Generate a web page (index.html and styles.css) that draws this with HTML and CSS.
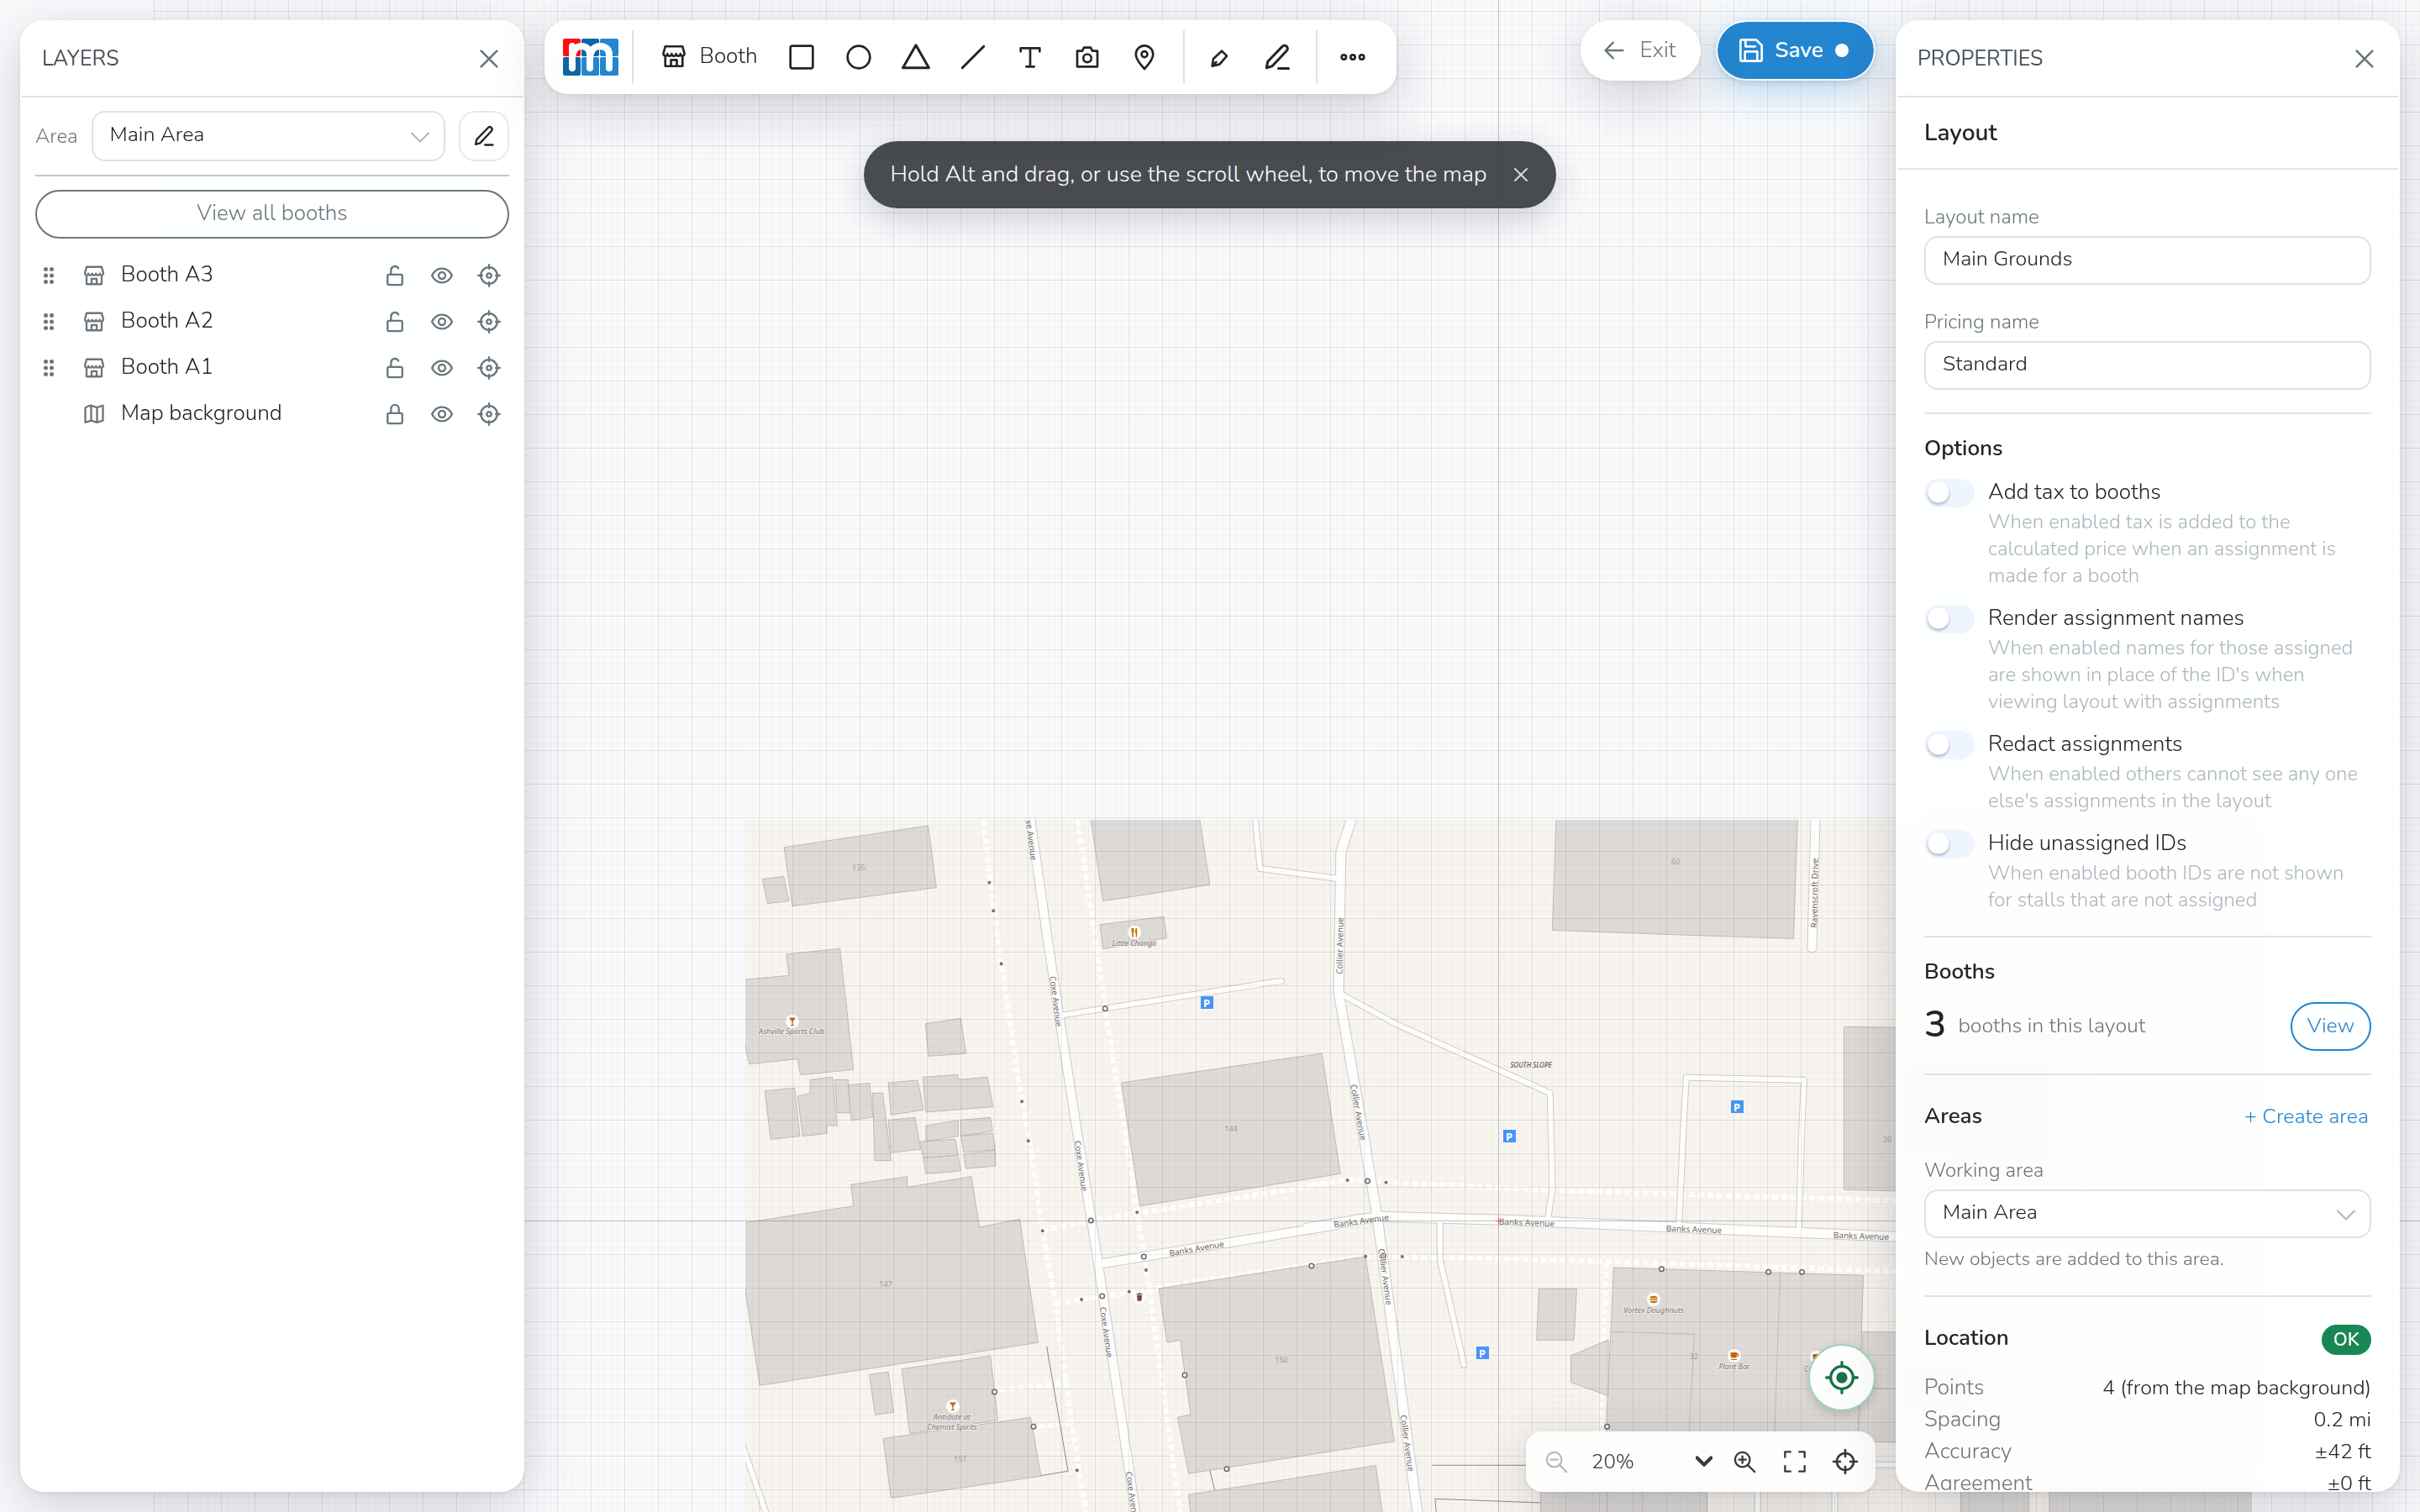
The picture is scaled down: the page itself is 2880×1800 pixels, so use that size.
FILE: index.html
```html
<!DOCTYPE html>
<html lang="en">
<head>
<meta charset="utf-8">
<meta name="viewport" content="width=device-width, initial-scale=1">
<title>Main Grounds – Layout editor</title>
<link rel="stylesheet" href="styles.css">
</head>
<body>
<svg class="sprite" aria-hidden="true">
  <symbol id="i-close" viewBox="0 0 24 24"><path d="M5 5l14 14M19 5L5 19"/></symbol>
  <symbol id="i-store" viewBox="0 0 24 24"><path d="M4.300 3.200h15.400l1.600 5.900c.3 1.500-.5 2.600-1.700 2.600-1.100 0-1.800-.8-1.800-1.800 0 1-.9 1.800-1.900 1.800s-1.950-.8-1.950-1.800c0 1-.9 1.800-1.950 1.800s-1.950-.8-1.950-1.800c0 1-.95 1.800-1.950 1.800s-1.900-.8-1.900-1.800c0 1-.7 1.800-1.800 1.800-1.200 0-2-1.100-1.700-2.600zM4.300 12v8.800h15.400V12M9.400 20.500v-5.200h5.200v5.200"/></symbol>
  <symbol id="i-map" viewBox="0 0 24 24"><path d="M3 5.500l3.500-1.800L9 3.200l6 2 6-2v15.300l-6 2-6-2-6 2zM9 3.500v15M15 5.500v15"/></symbol>
  <symbol id="i-unlock" viewBox="0 0 24 24"><rect x="4.500" y="11" width="15" height="10.500" rx="1.500"/><path d="M8 11V6.500a4 4 0 0 1 7.500-1.800"/></symbol>
  <symbol id="i-lock" viewBox="0 0 24 24"><rect x="4.500" y="11" width="15" height="10.500" rx="1.500"/><path d="M8 11V6.500a4 4 0 0 1 8 0V11"/></symbol>
  <symbol id="i-eye" viewBox="0 0 24 24"><path d="M1.800 12C4 7.500 7.800 4.800 12 4.800S20 7.500 22.200 12C20 16.500 16.200 19.200 12 19.200S4 16.500 1.800 12z"/><circle cx="12" cy="12" r="3.400"/></symbol>
  <symbol id="i-target" viewBox="0 0 24 24"><circle cx="12" cy="12" r="8.400"/><circle cx="12" cy="12" r="2.300"/><path d="M12 1v4M12 19v4M1 12h4M19 12h4"/></symbol>
  <symbol id="i-crosshair" viewBox="0 0 24 24"><circle cx="12" cy="12" r="7.500"/><path d="M12 1.500v6M12 16.500v6M1.500 12h6M16.500 12h6"/></symbol>
  <symbol id="i-grip" viewBox="0 0 24 24"><path class="dots" d="M8.500 4.500h0M15.500 4.500h0M8.500 12h0M15.500 12h0M8.500 19.500h0M15.500 19.500h0"/></symbol>
  <symbol id="i-edit" viewBox="0 0 24 24"><path d="M3.500 20.500l1-5L16 3.600a2.400 2.400 0 0 1 3.600 3.200L8 19.200zM13 21h8"/></symbol>
  <symbol id="i-pen" viewBox="0 0 24 24"><path d="M5 20l1-6.500 7.500-7 4.500 4.500-6.500 7.500zM5 20l3.500-3.500"/></symbol>
  <symbol id="i-chevron" viewBox="0 0 24 24"><path d="M2 6.500l10 10 10-10"/></symbol>
  <symbol id="i-square" viewBox="0 0 24 24"><rect x="2" y="2" width="20" height="20" rx="1.800"/></symbol>
  <symbol id="i-circle" viewBox="0 0 24 24"><circle cx="12" cy="12" r="10"/></symbol>
  <symbol id="i-triangle" viewBox="0 0 24 24"><path d="M12 2.500L22.300 20.500H1.700z"/></symbol>
  <symbol id="i-line" viewBox="0 0 24 24"><path d="M3.500 20.500l17-17"/></symbol>
  <symbol id="i-text" viewBox="0 0 24 24"><path d="M3.500 7V4h17v3M12 4v16.500M8.500 20.500h7"/></symbol>
  <symbol id="i-camera" viewBox="0 0 24 24"><path d="M3 6.500h4.500L9 3.500h6l1.500 3H21v14H3z"/><circle cx="12" cy="13" r="3.600"/></symbol>
  <symbol id="i-pin" viewBox="0 0 24 24"><path d="M12 22.500C7 17 4.300 13 4.300 9.500a7.700 7.700 0 0 1 15.400 0c0 3.500-2.700 7.500-7.700 13z"/><circle cx="12" cy="9.500" r="2.600"/></symbol>
  <symbol id="i-more" viewBox="0 0 24 24"><circle cx="4" cy="12" r="2"/><circle cx="12" cy="12" r="2"/><circle cx="20" cy="12" r="2"/></symbol>
  <symbol id="i-back" viewBox="0 0 24 24"><path d="M21 12H3.500M11 4l-8 8 8 8"/></symbol>
  <symbol id="i-save" viewBox="0 0 24 24"><path d="M4 2.500h12.500L21.500 7.500V20a1.500 1.500 0 0 1-1.500 1.500H4A1.500 1.500 0 0 1 2.500 20V4A1.500 1.500 0 0 1 4 2.500zM7 3v5.500h8.500M6.500 21v-8h11v8"/></symbol>
  <symbol id="i-zoom-out" viewBox="0 0 24 24"><circle cx="10" cy="10" r="7.500"/><path d="M15.500 15.500l7 7M6.500 10h7"/></symbol>
  <symbol id="i-zoom-in" viewBox="0 0 24 24"><circle cx="10" cy="10" r="7.500"/><path d="M15.500 15.500l7 7M6.500 10h7M10 6.500v7"/></symbol>
  <symbol id="i-full" viewBox="0 0 24 24"><path d="M2 7.500V2h5.500M16.500 2H22v5.500M22 16.500V22h-5.500M7.500 22H2v-5.500"/></symbol>
  <symbol id="i-locate" viewBox="0 0 24 24"><circle cx="12" cy="12" r="8"/><circle class="solid" cx="12" cy="12" r="4"/><path d="M12 1v3M12 20v3M1 12h3M20 12h3"/></symbol>
  <symbol id="poi-bar" viewBox="0 0 16 16"><circle class="poi-bg" cx="8" cy="8" r="8"/><path class="poi-fg" d="M4 3.500h8L8.700 8v4H10v1H6v-1h1.300V8z"/></symbol>
  <symbol id="poi-food" viewBox="0 0 16 16"><circle class="poi-bg" cx="8" cy="8" r="8"/><path class="poi-fg" d="M4.500 3h3v4L7 8v5.500H5.300V8l-.8-1zM9 5c0-1.500 1-2 2.200-2v10.500H9.700V9H9z"/></symbol>
  <symbol id="poi-burger" viewBox="0 0 16 16"><circle class="poi-bg" cx="8" cy="8" r="8"/><path class="poi-fg" d="M3.500 6c0-3 9-3 9 0v.5h-9zM3.500 7.500h9V9h-9zM3.500 10h9c0 3-9 3-9 0z"/></symbol>
  <symbol id="poi-cafe" viewBox="0 0 16 16"><circle class="poi-bg" cx="8" cy="8" r="8"/><path class="poi-fg" d="M3.500 4H11v1h2.200v3.500H11C11 10 10 10.500 9 10.500H6C4.500 10.500 3.500 9.500 3.500 8zM11 6v1.500h1.200V6zM4 12h7v1H4z"/></symbol>
  <symbol id="poi-bin" viewBox="0 0 16 16"><circle class="poi-bg" cx="8" cy="8" r="8"/><path class="bin-fg" d="M4.500 4H7V3h2v1h2.500v1h-7zM5 5.700h6l-.6 7H5.600z"/></symbol>
</svg>

<main class="editor">
  <svg class="canvas" role="img" aria-label="Map of the grounds">
    <defs>
      <pattern id="grid-minor" x="183" y="13" width="8" height="8" patternUnits="userSpaceOnUse"><path class="grid-minor" d="M.5 0V8M0 .5H8"/></pattern>
      <pattern id="grid-major" x="183" y="13" width="40" height="40" patternUnits="userSpaceOnUse"><path class="grid-major" d="M.5 0V40M0 .5H40"/></pattern>
      <clipPath id="map-clip"><rect x="887" y="976" width="1793" height="1600"/></clipPath>
      <g id="roads-nw">
        <path class="service" d="M862 745L1445 623M1374 30L1388 222L1593 257"/>
      </g>
      <g id="roads-sw">
        <path class="service" d="M5 1040L75 1310"/>
      </g>
      <g id="roads-ne">
        <path class="service" d="M75 668L222 778L620 1024L624 1240M962 1240L973 968L1278 977L1270 1240"/>
      </g>
      <g id="roads-se">
        <path class="service" d="M624 0L626 140L614 245M963 0L954 270M1271 0L1265 285M335 250V390L397 765M1027 1105L1520 1122L2439 1188M1158 1110V1320M1358 1116V1320"/>
      </g>
      <g id="streets-nw"><path class="street" d="M774 30L822 480L852 745L909 1240"/></g>
      <g id="streets-sw"><path class="street" d="M909 0L956 400L1058 1310M956 405L1590 265"/></g>
      <g id="streets-ne"><path class="street wide" d="M109 30L78 162L72 665L145 1240"/><path class="street" d="M1308 30L1299 505"/></g>
      <g id="streets-se"><path class="street wide" d="M143 0L172 235L278 1310M-10 276L172 235L500 247L1516 307L2450 352"/></g>
    </defs>

    <g clip-path="url(#map-clip)">
      <rect class="land" x="887" y="976" width="1793" height="1600"/>

      <g class="paths">
        <g transform="translate(880 960) scale(.44643 .33333)">
          <path d="M650 48L688 470L740 940L779 1240M902 48L935 350L975 720L1036 1235"/>
        </g>
        <g transform="translate(880 1370) scale(.44643 .33333)">
          <path d="M779 10L808 285L843 545L885 970L926 1310M1036 5L1060 220L1080 378L1095 520L1177 1310M808 285L937 249L1568 118M843 545L967 519L1060 503L1120 487L1568 398M881 826L681 855M885 972L784 988"/>
        </g>
        <g transform="translate(1560 1370) scale(.45918 .33333)">
          <path d="M0 122L100 103L200 112L620 141L1516 178L2439 215M0 408L142 378L240 378L760 395L1516 430L2439 470M766 400L752 1010"/>
        </g>
      </g>

      <g class="buildings">
        <g transform="translate(880 960) scale(.44643 .33333)">
          <path d="M119 146L503 69L525 290L141 356zM61 260L118 250L132 338L75 347zM935 30H1225L1254 280L969 338zM961 422L1131 394L1139 470L969 509z"/>
          <path d="M10 619L132 604L125 528L268 508L304 940L163 959L155 902L26 920L10 820zM496 776L590 757L604 883L504 892z"/>
          <path d="M68 1016L147 1006L161 1178L83 1189zM155 1035L188 1025L189 976L248 967L261 1140H233V1168L169 1178zM254 976H290L295 1094H261zM290 995L347 988L356 1110L298 1121zM355 1024H382L404 1265H361z"/>
          <path d="M397 987L475 978L491 1084L404 1102zM489 967L582 958L583 976L661 967L676 1073L497 1092zM397 1120L468 1111L483 1225L404 1236zM497 1140L583 1121V1178L497 1195zM590 1120L669 1111L675 1160L590 1177zM590 1177L675 1168L682 1226L598 1236zM483 1198L575 1188L583 1246L490 1255zM490 1255L583 1246L590 1302L497 1312zM597 1244L682 1228L683 1284L604 1294z"/>
          <path d="M1018 987L1553 882L1602 1312L1068 1427z"/>
        </g>
        <g transform="translate(880 1370) scale(.44643 .33333)">
          <path d="M10 258L304 197L297 121L447 92V130L618 92L640 273L747 244L796 685L54 838L10 450zM346 799L397 790L411 934L362 943zM433 779L669 733L689 962L454 1010zM383 1028L776 952L804 1162L404 1240z"/>
          <path d="M1118 492L1669 378L1746 1038L1197 1153L1168 952L1203 942L1175 676L1140 684zM1197 1228L1696 1124L1716 1310H1204z"/>
          <path class="fence" d="M819 698L876 1144L804 1160M1254 1142L1267 1212"/>
        </g>
        <g transform="translate(1560 960) scale(.45918 .33333)">
          <path d="M636 30H1262L1251 472L940 458L626 442zM1382 787L2000 800V1390L1382 1369z"/>
        </g>
        <g transform="translate(1560 1370) scale(.45918 .33333)">
          <path d="M591 493H689L682 676H585zM785 417L1432 445L1418 1040L765 1010zM1431 646L1800 655V1050L1418 1038zM771 675V875L674 827V732zM596 1150H1027V1310H596zM1684 1186L1860 1190V1310H1684zM1914 1192L2450 1206V1310H1914z"/>
          <path d="M1216 436L1202 1020M780 646L994 655L980 1010M1421 848L1800 852M768 1150V1310M860 1150V1310"/>
          <path class="fence" d="M315 1123H600M326 1310L322 1243L596 1257"/>
        </g>
      </g>

      <g class="casing">
        <use href="#roads-nw" transform="translate(880 960) scale(.44643 .33333)"/>
        <use href="#roads-sw" transform="translate(880 1370) scale(.44643 .33333)"/>
        <use href="#roads-ne" transform="translate(1560 960) scale(.45918 .33333)"/>
        <use href="#roads-se" transform="translate(1560 1370) scale(.45918 .33333)"/>
        <use href="#streets-nw" transform="translate(880 960) scale(.44643 .33333)"/>
        <use href="#streets-sw" transform="translate(880 1370) scale(.44643 .33333)"/>
        <use href="#streets-ne" transform="translate(1560 960) scale(.45918 .33333)"/>
        <use href="#streets-se" transform="translate(1560 1370) scale(.45918 .33333)"/>
      </g>
      <g class="surface">
        <use href="#roads-nw" transform="translate(880 960) scale(.44643 .33333)"/>
        <use href="#roads-sw" transform="translate(880 1370) scale(.44643 .33333)"/>
        <use href="#roads-ne" transform="translate(1560 960) scale(.45918 .33333)"/>
        <use href="#roads-se" transform="translate(1560 1370) scale(.45918 .33333)"/>
        <use href="#streets-nw" transform="translate(880 960) scale(.44643 .33333)"/>
        <use href="#streets-sw" transform="translate(880 1370) scale(.44643 .33333)"/>
        <use href="#streets-ne" transform="translate(1560 960) scale(.45918 .33333)"/>
        <use href="#streets-se" transform="translate(1560 1370) scale(.45918 .33333)"/>
      </g>

      <g class="nodes">
        <g transform="translate(880 960) scale(.44643 .33333)"><path d="M666 272h0M677 373h0M698 562h0M753 1054h0M770 1195h0"/><path class="ring" d="M975 722h0"/><path class="hole" d="M975 722h0"/></g>
        <g transform="translate(880 1370) scale(.44643 .33333)"><path d="M808 286h0M1060 220h0M1084 426h0M1039 503h0M912 531h0M900 1141h0"/><path class="ring" d="M937 249h0M1078 378h0M967 519h0M1525 411h0M1187 801h0M680 861h0M784 985h0M1299 1136h0"/><path class="hole" d="M937 249h0M1078 378h0M967 519h0M1525 411h0M1187 801h0M680 861h0M784 985h0M1299 1136h0"/></g>
        <g transform="translate(1560 1370) scale(.45918 .33333)"><path d="M95 105h0M195 113h0M142 377h0M237 378h0"/><path class="ring" d="M147 108h0M188 375h0M909 422h0M1186 433h0M1273 433h0M768 985h0"/><path class="hole" d="M147 108h0M188 375h0M909 422h0M1186 433h0M1273 433h0M768 985h0"/></g>
      </g>

      <g class="street-names">
        <text transform="translate(1227 994) rotate(83)">Coxe Avenue</text>
        <text transform="translate(1257 1192) rotate(83)">Coxe Avenue</text>
        <text transform="translate(1287 1388) rotate(82)">Coxe Avenue</text>
        <text transform="translate(1317 1586) rotate(82)">Coxe Avenue</text>
        <text transform="translate(1348 1782) rotate(82)">Coxe Avenue</text>
        <text transform="translate(1424 1486) rotate(-10)">Banks Avenue</text>
        <text transform="translate(1620 1453) rotate(-8)">Banks Avenue</text>
        <text transform="translate(1817 1455) rotate(2)">Banks Avenue</text>
        <text transform="translate(2016 1463) rotate(2)">Banks Avenue</text>
        <text transform="translate(2215 1471) rotate(2)">Banks Avenue</text>
        <text transform="translate(1594 1126) rotate(-89)">Collier Avenue</text>
        <text transform="translate(1617 1324) rotate(80)">Collier Avenue</text>
        <text transform="translate(1649 1520) rotate(82)">Collier Avenue</text>
        <text transform="translate(1675 1718) rotate(82)">Collier Avenue</text>
        <text transform="translate(2159 1063) rotate(-89)">Ravenscroft Drive</text>
      </g>
      <g class="house-numbers">
        <text x="1022" y="1032">135</text><text x="1465" y="1343">144</text><text x="1054" y="1528">147</text><text x="1525" y="1618">150</text>
        <text x="1143" y="1736">151</text><text x="1994" y="1025">60</text><text x="2246" y="1356">39</text><text x="2016" y="1614">32</text>
      </g>
      <text class="district" x="1822" y="1267">SOUTH SLOPE</text>
      <g class="places">
        <use href="#poi-food" x="1342" y="1102" width="16" height="16"/><text x="1350" y="1122">Little Chango</text>
        <use href="#poi-bar" x="935" y="1208" width="16" height="16"/><text x="942" y="1227">Ashville Sports Club</text>
        <use href="#poi-bar" x="1126" y="1666" width="16" height="16"/><text x="1133" y="1686">Antidote at</text><text x="1133" y="1698">Chemist Spirits</text>
        <use href="#poi-bin" x="1348" y="1536" width="16" height="16"/>
        <use href="#poi-burger" x="1960" y="1539" width="16" height="16"/><text x="1968" y="1559">Vortex Doughnuts</text>
        <use href="#poi-cafe" x="2056" y="1606" width="16" height="16"/><text x="2064" y="1626">Plant Bar</text>
        <use href="#poi-cafe" x="2154" y="1608" width="16" height="16"/><text x="2166" y="1629">Chai Pani</text>
      </g>
      <g class="parking">
        <rect x="1429" y="1186" width="15" height="15"/><text x="1436" y="1194">P</text>
        <rect x="2060" y="1310" width="15" height="15"/><text x="2067" y="1318">P</text>
        <rect x="1789" y="1345" width="15" height="15"/><text x="1796" y="1353">P</text>
        <rect x="1757" y="1603" width="15" height="15"/><text x="1764" y="1611">P</text>
      </g>
    </g>

    <svg x="183" y="0" width="3200" height="3052" viewBox="183 0 3200 3052">
      <rect x="183" y="0" width="3200" height="3052" fill="url(#grid-minor)"/>
      <rect x="183" y="0" width="3200" height="3052" fill="url(#grid-major)"/>
      <path class="axis" d="M1783.500 0V3052M183 1453.500H3383"/>
      <path class="origin" d="M1783.500 1449.500v8M1779.500 1453.500h8"/>
    </svg>
  </svg>

  <div class="overlay">
    <aside class="panel" aria-label="Layers">
      <header class="panel-head">
        <h2>LAYERS</h2>
        <button class="icon-btn" aria-label="Close layers"><svg class="icon i32"><use href="#i-close"/></svg></button>
      </header>
      <div class="layers">
        <div class="area-row">
          <label for="area">Area</label>
          <div class="select"><select id="area"><option>Main Area</option></select><svg class="icon chevron"><use href="#i-chevron"/></svg></div>
          <button class="edit-btn" aria-label="Edit area"><svg class="icon i28"><use href="#i-edit"/></svg></button>
        </div>
        <button class="view-all">View all booths</button>
        <ul class="layer-list">
          <li><svg class="icon i24 grip"><use href="#i-grip"/></svg><svg class="icon i28"><use href="#i-store"/></svg><span>Booth A3</span>
            <button class="icon-btn" aria-label="Lock"><svg class="icon i28"><use href="#i-unlock"/></svg></button><button class="icon-btn" aria-label="Visibility"><svg class="icon i28"><use href="#i-eye"/></svg></button><button class="icon-btn" aria-label="Centre"><svg class="icon i28"><use href="#i-target"/></svg></button></li>
          <li><svg class="icon i24 grip"><use href="#i-grip"/></svg><svg class="icon i28"><use href="#i-store"/></svg><span>Booth A2</span>
            <button class="icon-btn" aria-label="Lock"><svg class="icon i28"><use href="#i-unlock"/></svg></button><button class="icon-btn" aria-label="Visibility"><svg class="icon i28"><use href="#i-eye"/></svg></button><button class="icon-btn" aria-label="Centre"><svg class="icon i28"><use href="#i-target"/></svg></button></li>
          <li><svg class="icon i24 grip"><use href="#i-grip"/></svg><svg class="icon i28"><use href="#i-store"/></svg><span>Booth A1</span>
            <button class="icon-btn" aria-label="Lock"><svg class="icon i28"><use href="#i-unlock"/></svg></button><button class="icon-btn" aria-label="Visibility"><svg class="icon i28"><use href="#i-eye"/></svg></button><button class="icon-btn" aria-label="Centre"><svg class="icon i28"><use href="#i-target"/></svg></button></li>
          <li><i class="no-grip"></i><svg class="icon i28"><use href="#i-map"/></svg><span>Map background</span>
            <button class="icon-btn" aria-label="Unlock"><svg class="icon i28"><use href="#i-lock"/></svg></button><button class="icon-btn" aria-label="Visibility"><svg class="icon i28"><use href="#i-eye"/></svg></button><button class="icon-btn" aria-label="Centre"><svg class="icon i28"><use href="#i-target"/></svg></button></li>
        </ul>
      </div>
    </aside>

    <section class="stage">
      <div class="top">
        <div class="toolbar" role="toolbar" aria-label="Drawing tools">
          <a class="logo" href="#" aria-label="Home">
            <svg viewBox="0 0 66 44" width="66" height="44">
              <rect width="21" height="21" rx="2" fill="#ff0d12"/><rect x="22" width="21" height="21" rx="2" fill="#0f65a5"/><rect x="44" width="22" height="21" rx="2" fill="#2486d0"/>
              <rect y="22" width="21" height="22" rx="2" fill="#0f65a5"/><rect x="22" y="22" width="21" height="22" rx="2" fill="#2486d0"/><rect x="44" y="22" width="22" height="22" rx="2" fill="#2486d0"/>
              <path d="M11 9V35M11 22C12 14 16 9 22 9s10 4 10 10v16M32 22c1-8 5-13 12-13s11 4 11 10v16" fill="none" stroke="#fff" stroke-width="8" stroke-linecap="round"/>
            </svg>
          </a>
          <i class="rule"></i>
          <button class="tool booth"><svg class="icon i32"><use href="#i-store"/></svg>Booth</button>
          <button class="tool" aria-label="Rectangle"><svg class="icon i32"><use href="#i-square"/></svg></button>
          <button class="tool" aria-label="Ellipse"><svg class="icon i32"><use href="#i-circle"/></svg></button>
          <button class="tool" aria-label="Triangle"><svg class="icon i36"><use href="#i-triangle"/></svg></button>
          <button class="tool" aria-label="Line"><svg class="icon i36"><use href="#i-line"/></svg></button>
          <button class="tool" aria-label="Text"><svg class="icon i32"><use href="#i-text"/></svg></button>
          <button class="tool" aria-label="Image"><svg class="icon i32"><use href="#i-camera"/></svg></button>
          <button class="tool" aria-label="Pin"><svg class="icon i32"><use href="#i-pin"/></svg></button>
          <i class="rule"></i>
          <button class="tool" aria-label="Pen"><svg class="icon i32"><use href="#i-pen"/></svg></button>
          <button class="tool" aria-label="Edit"><svg class="icon i36"><use href="#i-edit"/></svg></button>
          <i class="rule"></i>
          <button class="tool" aria-label="More"><svg class="icon i32"><use href="#i-more"/></svg></button>
        </div>
        <div class="actions">
          <button class="pill exit"><svg class="icon i28"><use href="#i-back"/></svg>Exit</button>
          <button class="pill save"><svg class="icon i32"><use href="#i-save"/></svg>Save<i class="unsaved"></i></button>
        </div>
      </div>
      <div class="toast" role="status">
        <span>Hold Alt and drag, or use the scroll wheel, to move the map</span>
        <button class="icon-btn" aria-label="Dismiss"><svg class="icon i24"><use href="#i-close"/></svg></button>
      </div>
      <div class="bottom">
        <button class="locate" aria-label="Locate"><svg class="icon i40"><use href="#i-locate"/></svg></button>
        <div class="zoombar">
          <button class="tool" aria-label="Zoom out" disabled><svg class="icon i28"><use href="#i-zoom-out"/></svg></button>
          <div class="zoom-level"><select aria-label="Zoom level"><option>20%</option></select><svg class="icon i20"><use href="#i-chevron"/></svg></div>
          <button class="tool" aria-label="Zoom in"><svg class="icon i28"><use href="#i-zoom-in"/></svg></button>
          <button class="tool" aria-label="Fit to screen"><svg class="icon i28"><use href="#i-full"/></svg></button>
          <button class="tool" aria-label="Centre"><svg class="icon i32"><use href="#i-crosshair"/></svg></button>
        </div>
      </div>
    </section>

    <aside class="panel" aria-label="Properties">
      <header class="panel-head">
        <h2>PROPERTIES</h2>
        <button class="icon-btn" aria-label="Close properties"><svg class="icon i32"><use href="#i-close"/></svg></button>
      </header>
      <h3 class="panel-title">Layout</h3>
      <div class="props">
        <div class="field"><label for="layout-name">Layout name</label><input id="layout-name" type="text" value="Main Grounds"></div>
        <div class="field"><label for="pricing-name">Pricing name</label><input id="pricing-name" type="text" value="Standard"></div>
        <section>
          <h4>Options</h4>
          <div class="options">
            <div class="option"><input type="checkbox" role="switch" id="o1"><label for="o1">Add tax to booths<small>When enabled tax is added to the calculated price when an assignment is made for a booth</small></label></div>
            <div class="option"><input type="checkbox" role="switch" id="o2"><label for="o2">Render assignment names<small>When enabled names for those assigned are shown in place of the ID's when viewing layout with assignments</small></label></div>
            <div class="option"><input type="checkbox" role="switch" id="o3"><label for="o3">Redact assignments<small>When enabled others cannot see any one else's assignments in the layout</small></label></div>
            <div class="option"><input type="checkbox" role="switch" id="o4"><label for="o4">Hide unassigned IDs<small>When enabled booth IDs are not shown for stalls that are not assigned</small></label></div>
          </div>
        </section>
        <section>
          <h4>Booths</h4>
          <div class="count"><strong>3</strong><span>booths in this layout</span><button class="view">View</button></div>
        </section>
        <section>
          <div class="section-head"><h4>Areas</h4><button class="link-btn">+ Create area</button></div>
          <div class="field"><label for="working-area">Working area</label>
            <div class="select"><select id="working-area"><option>Main Area</option></select><svg class="icon chevron"><use href="#i-chevron"/></svg></div>
            <p class="hint">New objects are added to this area.</p></div>
        </section>
        <section>
          <div class="section-head"><h4>Location</h4><span class="badge">OK</span></div>
          <dl class="facts">
            <div><dt>Points</dt><dd>4 (from the map background)</dd></div>
            <div><dt>Spacing</dt><dd>0.2 mi</dd></div>
            <div><dt>Accuracy</dt><dd>±42 ft</dd></div>
            <div><dt>Agreement</dt><dd>±0 ft</dd></div>
          </dl>
        </section>
      </div>
    </aside>
  </div>
</main>
</body>
</html>
```
FILE: styles.css
```css
:root {
  --ink: #212529;
  --muted: #6c757d;
  --faint: #adb5bd;
  --line: #dee2e6;
  --blue: #2486d0;
}
* { box-sizing: border-box; }
body {
  margin: 0;
  background: #f8fafc;
  color: var(--ink);
  font: 300 26px/38px Nunito, "Open Sans", sans-serif;
}
button, input, select { font: inherit; color: inherit; margin: 0; }
button { padding: 0; border: 0; background: none; cursor: pointer; }
h2, h3, h4, p, ul, dl, dd { margin: 0; padding: 0; }
.sprite { display: none; }

/* icons */
.icon { flex: none; fill: none; stroke: currentColor; stroke-width: 2; stroke-linejoin: round; stroke-linecap: round; }
.i20 { width: 20px; height: 20px; stroke-width: 3; }
.i24 { width: 24px; height: 24px; }
.i28 { width: 28px; height: 28px; }
.i32 { width: 32px; height: 32px; }
.i36 { width: 36px; height: 36px; }
.i40 { width: 40px; height: 40px; }
.solid { fill: currentColor; stroke: none; }
.dots { stroke-width: 5px; }

/* map canvas */
.editor { position: relative; height: 100vh; overflow: hidden; }
.canvas { position: absolute; inset: 0; width: 100%; height: 100%; }
.canvas path { vector-effect: non-scaling-stroke; }
.grid-minor { stroke: rgba(60, 65, 75, .03); fill: none; }
.grid-major { stroke: rgba(60, 65, 75, .09); fill: none; }
.axis { stroke: rgba(60, 65, 75, .22); }
.origin { stroke: #f0524f; }
.land { fill: #f8f4ef; }
.paths { fill: none; stroke: #fff; stroke-width: 6; stroke-dasharray: 7 4; }
.buildings { fill: #dddad7; stroke: #bfbbb8; stroke-width: 1; }
.fence { fill: none; stroke: #8b8886; }
.casing, .surface { fill: none; stroke-linejoin: round; stroke-linecap: round; }
.casing { stroke: #cfcbc7; --extra: 2px; }
.surface { stroke: #fff; --extra: 0px; }
.street { stroke-width: calc(10px + var(--extra)); }
.street.wide { stroke-width: calc(11px + var(--extra)); }
.service { stroke-width: calc(6px + var(--extra)); }
.nodes { stroke: #77716f; stroke-width: 4; stroke-linecap: round; }
.ring { stroke-width: 7px; stroke: #6c6866; }
.hole { stroke-width: 4px; stroke: #fff; }
.canvas text { font: 400 10px "Noto Sans", sans-serif; text-anchor: middle; dominant-baseline: central; paint-order: stroke; }
.canvas .street-names text { fill: #6e6a67; stroke: #fff; stroke-width: 1px; }
.canvas .house-numbers text { font-size: 9px; fill: #a19d9a; }
.canvas .district { font-size: 8px; font-weight: 500; font-style: italic; fill: #5d5a58; }
.canvas .places text { font-size: 9px; font-style: italic; fill: #7a7673; stroke: #eeebe8; stroke-width: 2px; }
.poi-bg { fill: #fff; stroke: none; }
.poi-fg { fill: #c86d05; }
.bin-fg { fill: #6f4a40; }
.parking rect { fill: #4796f8; }
.canvas .parking text { font-size: 13px; font-weight: 700; fill: #fff; }

/* floating chrome */
.overlay {
  position: absolute;
  inset: 0;
  display: grid;
  grid-template-columns: 600px minmax(0, 1fr) 600px;
  grid-template-rows: minmax(0, 1fr);
  gap: 24px;
  padding: 24px;
}
.panel, .toolbar, .exit, .zoombar {
  background: rgba(255, 255, 255, .9);
  backdrop-filter: blur(24px);
  border: 2px solid rgba(255, 255, 255, .6);
  box-shadow: 0 16px 64px rgba(33, 37, 51, .2), 0 2px 6px rgba(33, 37, 51, .08);
}
.panel { border-radius: 28px; overflow: hidden; }
.panel-head {
  display: flex;
  align-items: center;
  justify-content: space-between;
  height: 90px;
  padding: 0 24px;
  border-bottom: 2px solid var(--line);
}
.panel-head h2 { font-size: 25px; font-weight: 400; color: #495057; }
.icon-btn { display: grid; place-items: center; width: 56px; height: 48px; color: var(--muted); }
.panel-head .icon-btn { width: 32px; }

/* layers */
.layers { padding: 16px; }
.area-row {
  display: flex;
  align-items: center;
  gap: 16px;
  padding-bottom: 16px;
  border-bottom: 2px solid #c4c6c8;
  color: var(--muted);
  font-size: 24px;
}
.area-row .select { flex: 1; }
.select { position: relative; }
.select select, .field input {
  display: block;
  width: 100%;
  height: 58px;
  padding: 0 20px 4px;
  border: 2px solid var(--line);
  border-radius: 16px;
  background: #fff;
  color: var(--ink);
  font-size: 25px;
  appearance: none;
}
.area-row select { height: 60px; }
.chevron { position: absolute; right: 18px; top: calc(50% - 10px); width: 24px; height: 24px; color: var(--faint); pointer-events: none; }
.edit-btn { display: grid; place-items: center; width: 60px; height: 60px; border: 2px solid #e6e8ea; border-radius: 20px; color: var(--ink); }
.view-all {
  display: block;
  width: 100%;
  height: 58px;
  margin: 16px 0;
  padding-bottom: 2px;
  border: 2px solid var(--muted);
  border-radius: 29px;
  color: var(--muted);
}
.layer-list { list-style: none; color: var(--muted); }
.layer-list li { display: flex; align-items: center; height: 55px; padding-left: 4px; }
.layer-list .grip, .no-grip { width: 24px; margin-right: 28px; }
.layer-list span { flex: 1; padding: 0 0 2px 18px; color: var(--ink); }
.layer-list .icon-btn:last-child { margin-right: -4px; }

/* toolbar */
.stage { display: flex; flex-direction: column; align-items: center; min-width: 0; }
.top { display: flex; align-items: flex-start; justify-content: space-between; width: 100%; }
.toolbar { display: flex; align-items: center; gap: 8px; height: 88px; padding: 0 20px; border-radius: 28px; }
.tool { display: grid; place-items: center; width: 60px; height: 60px; }
.tool.booth { display: flex; align-items: center; justify-content: center; gap: 14px; width: 150px; padding: 0 0 2px 6px; }
.tool:disabled { opacity: .35; }
.logo { height: 44px; }
.logo svg { display: block; }
.rule { width: 2px; height: 64px; margin: 0 4px 0 8px; background: var(--line); }
.actions { display: flex; gap: 18px; }
.pill { display: flex; align-items: center; justify-content: center; height: 72px; border-radius: 36px; }
.exit { gap: 17px; width: 143px; padding-right: 4px; color: var(--muted); }
.save {
  width: 190px;
  gap: 12px;
  padding-right: 6px;
  border: 2px solid rgba(255, 255, 255, .85);
  background: var(--blue);
  background-clip: padding-box;
  box-shadow: 0 12px 40px rgba(36, 134, 208, .3), 0 2px 6px rgba(33, 37, 51, .15);
  color: #fff;
  font-weight: 600;
}
.unsaved { width: 16px; height: 16px; margin-left: 2px; border-radius: 50%; background: #fff; }

.toast {
  display: flex;
  align-items: center;
  gap: 13px;
  height: 80px;
  margin-top: 56px;
  padding: 0 14px 0 32px;
  border-radius: 40px;
  background: rgba(52, 56, 61, .9);
  box-shadow: 0 12px 40px rgba(33, 37, 51, .2);
  color: #fff;
  font-size: 27px;
  white-space: nowrap;
}
.toast .icon-btn { color: #d8dadc; }

.bottom { display: flex; flex-direction: column; align-items: flex-end; gap: 24px; width: 100%; margin-top: auto; }
.locate {
  display: grid;
  place-items: center;
  width: 80px;
  height: 80px;
  border: 2px solid #9fd3ba;
  border-radius: 50%;
  background: rgba(255, 255, 255, .96);
  box-shadow: 0 4px 12px rgba(33, 37, 51, .2);
  color: #157347;
}
.zoombar { display: flex; align-items: center; height: 72px; padding: 0 4px; border-radius: 20px; color: #343a40; }
.zoom-level { position: relative; margin: 0 18px 0 12px; }
.zoom-level select { width: 134px; height: 56px; padding: 0; border: 0; background: none; color: #343a40; font-size: 24px; appearance: none; }
.zoom-level .icon { position: absolute; right: -10px; top: 18px; stroke-width: 5; pointer-events: none; }

/* properties */
.panel-title { height: 86px; padding: 23px 32px; border-bottom: 2px solid #e2e4e6; background: #fff; font-size: 28px; font-weight: 600; }
.props { padding: 40px 32px 0; }
.field { color: var(--muted); font-size: 24px; line-height: 32px; }
.field label { display: block; margin-bottom: 7px; }
.field + .field { margin-top: 28px; }
.props > section { margin-top: 27px; padding-top: 23px; border-top: 2px solid #e1e3e5; }
.props h4 { font-size: 26px; line-height: 36px; font-weight: 600; }
.options { display: grid; gap: 16px; margin-top: 15px; }
.option { display: flex; gap: 16px; }
.option input {
  flex: none;
  width: 60px;
  height: 34px;
  margin: 3px 0 0;
  border-radius: 17px;
  background:
    radial-gradient(circle at 17px 16px, #fff 12px, transparent 13px),
    radial-gradient(circle at 17px 18px, rgba(110, 125, 145, .45) 11px, transparent 15px),
    #eff5fd;
  appearance: none;
}
.option small { display: block; color: var(--faint); font-size: 24px; line-height: 32px; }
.count { display: flex; align-items: center; margin-top: 18px; color: var(--muted); font-size: 25px; }
.count strong { color: var(--ink); font-size: 44px; font-weight: 600; padding-bottom: 4px; }
.count span { flex: 1; padding: 0 0 2px 14px; }
.view { width: 96px; height: 58px; padding-bottom: 2px; border: 2px solid var(--blue); border-radius: 29px; color: var(--blue); }
.section-head { display: flex; align-items: center; justify-content: space-between; height: 52px; }
.link-btn { padding-right: 3px; color: var(--blue); font-size: 25px; }
.section-head + .field { margin-top: 22px; }
.hint { margin-top: 9px; font-size: 23px; }
.badge { margin-top: 4px; padding: 0 14px; border-radius: 18px; background: #198754; color: #fff; font-size: 22px; line-height: 36px; font-weight: 600; }
.facts { margin-top: 14px; }
.facts div { display: flex; justify-content: space-between; }
.facts dt { color: var(--muted); }
.facts dd { font-size: 25px; }
```
